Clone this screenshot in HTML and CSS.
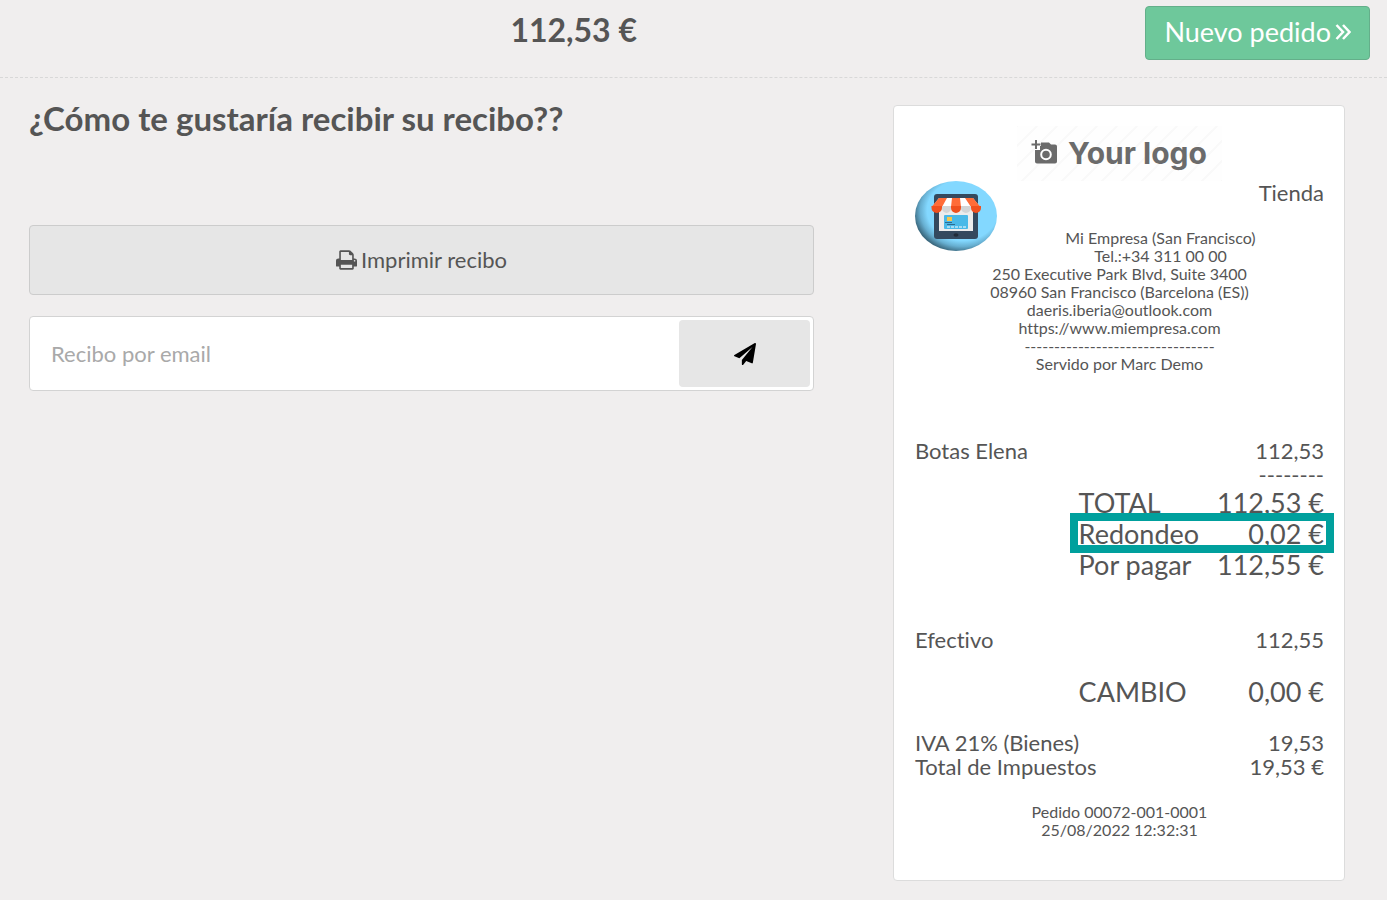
FILE: index.html
```html
<!DOCTYPE html>
<html lang="es">
<head>
<meta charset="utf-8">
<meta name="viewport" content="width=device-width, initial-scale=1">
<title>Recibo</title>
<link rel="stylesheet" href="styles.css">
</head>
<body>
<header class="top-bar">
  <h1 class="amount">112,53 €</h1>
  <button class="next" type="button">Nuevo pedido
    <svg class="next-icon" viewBox="0 0 16 18" aria-hidden="true"><path d="M1.500 2 8 9l-6.500 7M8 2l6.500 7L8 16"/></svg>
  </button>
</header>
<main class="content">
  <section class="actions">
    <h2 class="question">¿Cómo te gustaría recibir su recibo??</h2>
    <button class="print" type="button">
      <svg class="print-icon" viewBox="0 0 1664 1536" aria-hidden="true"><path d="M384 1408h896v-256H384v256zm0-640h896V384h-160q-40 0-68-28t-28-68V128H384v640zm1152 64q0-26-19-45t-45-19-45 19-19 45 19 45 45 19 45-19 19-45zm128 0v416q0 13-9.500 22.500t-22.500 9.500h-224v160q0 40-28 68t-68 28H352q-40 0-68-28t-28-68v-160H32q-13 0-22.500-9.500T0 1248V832q0-79 56.500-135.500T192 640h64V96q0-40 28-68t68-28h672q40 0 88 20t76 48l152 152q28 28 48 76t20 88v256h64q79 0 135.500 56.500T1664 832z"/></svg>
      <span>Imprimir recibo</span>
    </button>
    <form class="email">
      <input class="email-input" type="email" placeholder="Recibo por email" aria-label="Recibo por email">
      <button class="send" type="button" aria-label="Enviar">
        <svg class="send-icon" viewBox="0 0 1792 1792" aria-hidden="true"><path d="M1764 11q33 24 27 64l-256 1536q-5 29-32 45-14 8-31 8-11 0-24-5l-453-185-242 295q-18 23-49 23-13 0-22-4-19-7-30.500-23.500T640 1728v-349l864-1059-1069 925-395-162q-37-14-40-55-2-40 32-59L1696 9q15-9 32-9 20 0 36 11z"/></svg>
      </button>
    </form>
  </section>
  <aside class="receipt">
    <svg class="brand" viewBox="0 0 205 55" role="img" aria-label="Your logo">
      <defs><pattern id="stripes" width="20" height="20" patternUnits="userSpaceOnUse"><path d="M-2 22 22-2M-2 2 2-2M18 22l4-4" stroke="#f9f9f9" stroke-width="2"/></pattern></defs>
      <rect width="205" height="55" fill="#fefefe"/>
      <rect width="205" height="55" fill="url(#stripes)"/>
      <path d="M24 16.500h8l2 2h4q2 0 2 2v15q0 2-2 2H20q-2 0-2-2V24h5v-4h1z" fill="#6b6b6b"/>
      <path d="M19 14v9M14.500 18.500h9" stroke="#6b6b6b" stroke-width="2"/>
      <circle cx="29" cy="28.500" r="4.800" fill="none" stroke="#fff" stroke-width="2"/>
      <text class="brand-text" x="51" y="38">Your logo</text>
    </svg>
    <svg class="shop" viewBox="0 0 82 70" aria-hidden="true">
      <defs>
        <radialGradient id="disc" cx="58%" cy="42%" r="60%"><stop offset="0.720" stop-color="#83d8ff"/><stop offset="0.860" stop-color="#67afd1"/><stop offset="1" stop-color="#3c6a80"/></radialGradient>
      </defs>
      <ellipse cx="41" cy="35" rx="41" ry="35" fill="url(#disc)"/>
      <rect x="19" y="13" width="44" height="45" rx="3" fill="#34495e"/>
      <path d="M24 20h34v30H24z" fill="#ececec"/>
      <path d="M24 17h34l7 9H17z" fill="#fff"/>
      <path d="M24 17h8l-5 9H16.500zM37 17h8l1 9H36zM50 17h8l7.500 9H56z" fill="#ff6c38"/>
      <path d="M16.500 25H27v2a5.200 5 0 0 1-10.500 0zM36 25h10v2a5 5 0 0 1-10 0zM56 25h10v2a5 5 0 0 1-10 0z" fill="#f0501e"/>
      <path d="M27 25h9v2a4.500 5 0 0 1-9 0zM46 25h10v2a5 5 0 0 1-10 0z" fill="#d3d5d6"/>
      <rect x="29" y="34" width="24" height="14" rx="1" fill="#4ab9e8"/>
      <path d="M32 36h5v4h-5z" fill="#f5c64c"/>
      <path d="M30 41.500h7M32 43.500h8" stroke="#2b6b94"/>
      <path d="M32 46h20" stroke="#fff" stroke-width="1" stroke-dasharray="3 1"/>
      <ellipse cx="41" cy="54" rx="2.500" ry="1.800" fill="#202b38"/>
    </svg>
    <div class="store">Tienda</div>
    <div class="contact">
      <div>Mi Empresa (San Francisco)</div>
      <div>Tel.:+34 311 00 00</div>
      <div>250 Executive Park Blvd, Suite 3400</div>
      <div>08960 San Francisco (Barcelona (ES))</div>
      <div>daeris.iberia@outlook.com</div>
      <div>https://www.miempresa.com</div>
      <div>--------------------------------</div>
      <div>Servido por Marc Demo</div>
    </div>
    <div class="row"><span>Botas Elena</span><span>112,53</span></div>
    <div class="rule">--------</div>
    <div class="row total"><span>TOTAL</span><span>112,53 €</span></div>
    <div class="row total marked"><span>Redondeo</span><span>0,02 €</span></div>
    <div class="row total"><span>Por pagar</span><span>112,55 €</span></div>
    <div class="row payment"><span>Efectivo</span><span>112,55</span></div>
    <div class="row total change"><span>CAMBIO</span><span>0,00 €</span></div>
    <div class="row"><span>IVA 21% (Bienes)</span><span>19,53</span></div>
    <div class="row"><span>Total de Impuestos</span><span>19,53 €</span></div>
    <div class="order">
      <div>Pedido 00072-001-0001</div>
      <div>25/08/2022 12:32:31</div>
    </div>
  </aside>
</main>
</body>
</html>
```
FILE: styles.css
```css
* { box-sizing: border-box; }
body {
  margin: 0;
  background: #f0eeee;
  color: #555;
  font: 22px/24px Lato, sans-serif;
  font-variant-ligatures: none;
}
button, input { font: inherit; color: inherit; }
h1, h2 { margin: 0; font-weight: 700; }
.top-bar {
  display: flex;
  align-items: flex-start;
  gap: 4px;
  height: 78px;
  padding: 6px 17px 0 0;
  border-bottom: 1px dashed #d8d8d8;
}
.amount {
  flex: 1;
  padding-left: 6px;
  font-size: 32px;
  line-height: 48px;
  text-align: center;
}
.next {
  display: flex;
  align-items: center;
  gap: 4px;
  height: 54px;
  padding: 0 18px 2px;
  border: 1px solid #64af8a;
  border-radius: 4px;
  background: #6ec89b;
  color: #fff;
  font-size: 27px;
}
.next-icon {
  width: 16px;
  height: 18px;
  fill: none;
  stroke: #fff;
  stroke-width: 2.500;
}
.content {
  display: grid;
  grid-template-columns: minmax(0, 785fr) minmax(0, 452fr);
  column-gap: 79px;
  align-items: start;
  padding: 27px 42px 19px 29px;
}
.question {
  font-size: 33px;
  line-height: 26px;
  margin-bottom: 94px;
}
.print {
  display: flex;
  align-items: center;
  justify-content: center;
  gap: 4px;
  width: 100%;
  height: 70px;
  margin-bottom: 21px;
  border: 1px solid #ccc;
  border-radius: 4px;
  background: #e6e6e6;
}
.print-icon {
  width: 21px;
  height: 20px;
  fill: #555;
}
.email {
  display: flex;
  height: 75px;
  padding: 3px;
  border: 1px solid #d3d3d3;
  border-radius: 4px;
  background: #fff;
}
.email-input {
  flex: 1;
  min-width: 0;
  padding: 0 18px;
  border: 0;
  outline: 0;
  background: transparent;
}
.email-input::placeholder { color: #a9a9a9; opacity: 1; }
.send {
  display: flex;
  align-items: center;
  justify-content: center;
  width: 131px;
  border: 0;
  border-radius: 4px;
  background: #e6e6e6;
}
.send-icon { width: 22px; height: 22px; }
.receipt {
  padding: 20px 20px 41px 21px;
  border: 1px solid #dcdcdc;
  border-radius: 4px;
  background: #fff;
}
.brand {
  display: block;
  width: 205px;
  height: 55px;
  margin: 0 auto;
}
.brand-text {
  fill: #6b6b6b;
  font: 700 30px Inter, sans-serif;
}
.shop {
  float: left;
  width: 82px;
  height: 70px;
}
.store { text-align: right; margin-bottom: 24px; }
.contact, .order {
  font-size: 16px;
  line-height: 18px;
  text-align: center;
}
.contact { margin-bottom: 66px; }
.row { display: flex; justify-content: space-between; }
.rule { text-align: right; }
.total {
  position: relative;
  padding-left: 40%;
  font-size: 27px;
  line-height: 31px;
}
.marked::after {
  content: "";
  position: absolute;
  inset: -5px -10px -4px calc(40% - 9px);
  border: 8px solid #00a09d;
}
.payment { margin-top: 48px; }
.change { margin: 24px 0; }
.order { margin-top: 24px; }
```
